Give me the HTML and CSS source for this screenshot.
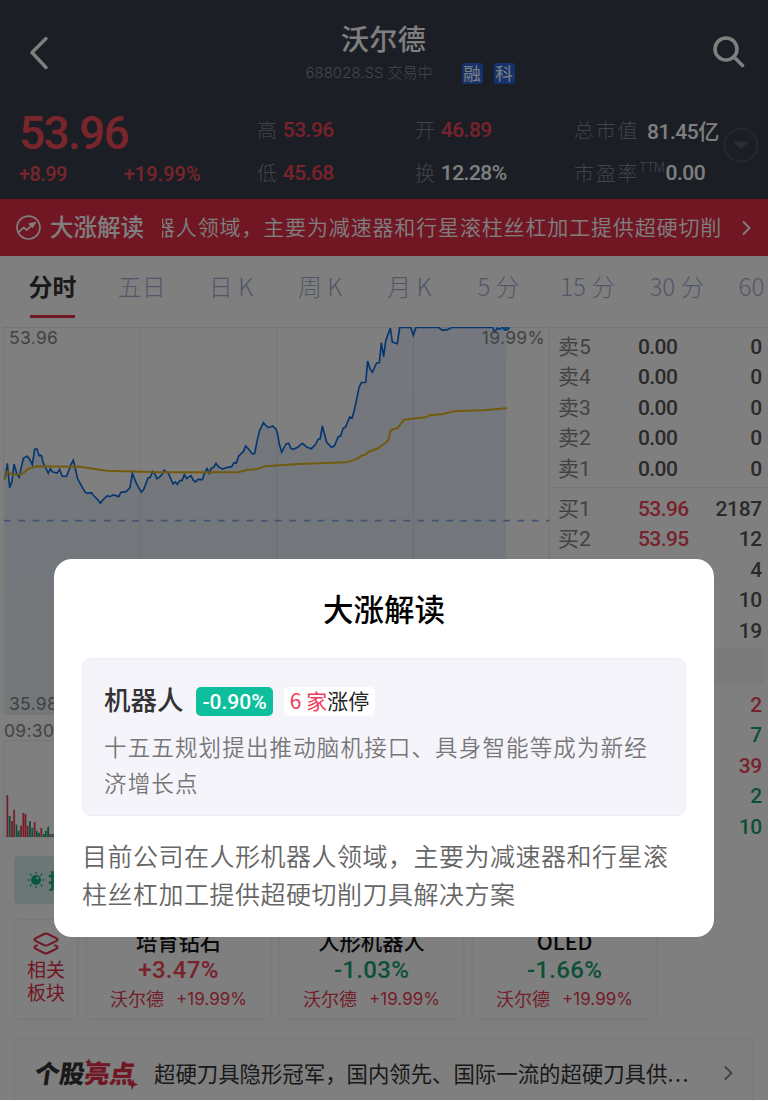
FILE: index.html
```html
<!DOCTYPE html>
<html lang="zh-CN">
<head>
    <meta charset="UTF-8" />
    <meta name="viewport" content="width=device-width, initial-scale=1.0" />
    <title>沃尔德</title>
    <link rel="stylesheet" href="styles.css">
</head>
<body>
    <div class="page">
        <header class="header">
            <div class="nav">
                <svg class="back" viewBox="0 0 20 34"><path d="M17 2.500L3 16.500L17 31.500" /></svg>
                <div class="title">
                    <h1>沃尔德</h1>
                    <div class="subtitle">
                        <span class="code">688028.SS 交易中</span>
                        <span class="tag">融</span>
                        <span class="tag">科</span>
                    </div>
                </div>
                <svg class="search" viewBox="0 0 32 32"><circle cx="13" cy="13" r="11" /><path d="M21 21L29.500 29.500" /></svg>
            </div>
            <div class="quote">
                <div class="price">
                    <div class="last">53.96</div>
                    <div class="change"><span>+8.99</span><span>+19.99%</span></div>
                </div>
                <div class="stats">
                    <div class="stat"><label>高</label><b class="up">53.96</b></div>
                    <div class="stat"><label>开</label><b class="up">46.89</b></div>
                    <div class="stat"><label>总市值</label><b class="cap">81.45亿</b></div>
                    <div class="stat"><label>低</label><b class="up">45.68</b></div>
                    <div class="stat"><label>换</label><b>12.28%</b></div>
                    <div class="stat ttm"><label>市盈率<sup>TTM</sup></label><b>0.00</b></div>
                </div>
                <svg class="more" viewBox="0 0 36 36"><circle cx="18" cy="18" r="16.500" /><path d="M10.500 14.500h15l-7.500 8z" /></svg>
            </div>
        </header>

        <div class="banner">
            <svg class="trend" viewBox="0 0 24 24"><circle cx="12" cy="12" r="11" /><path d="M2.500 16.500L7.500 11.800L10.200 14.500L15.500 9.500" /><path class="tip" d="M12.500 8.300L19 7L15.800 12z" /></svg>
            <strong>大涨解读</strong>
            <div class="marquee"><p>器人领域，主要为减速器和行星滚柱丝杠加工提供超硬切削刀</p></div>
            <svg class="arrow" viewBox="0 0 10 16"><path d="M1.500 2L7.500 8L1.500 14" /></svg>
        </div>

        <nav class="tabs">
            <a class="active">分时</a>
            <a>五日</a>
            <a>日 K</a>
            <a>周 K</a>
            <a>月 K</a>
            <a>5 分</a>
            <a>15 分</a>
            <a>30 分</a>
            <a>60 分</a>
        </nav>

        <div class="market">
            <div class="chart">
                <svg viewBox="0 213 1650 1542">
                    <defs>
                        <linearGradient id="area" x1="0" y1="0" x2="0" y2="1">
                            <stop offset="0" stop-color="#5b8fe8" stop-opacity=".14" />
                            <stop offset="1" stop-color="#4f90b8" stop-opacity=".14" />
                        </linearGradient>
                        <clipPath id="plot"><rect x="12" y="212" width="1640" height="1162" /></clipPath>
                    </defs>
                    <!-- grid -->
                    <path class="grid" d="M12 214.500H1648V1374H12ZM421 214V1374M831 214V1374M1240 214V1374M12 1454H1648V1743H12Z" />
                    <g clip-path="url(#plot)">
                        <path fill="url(#area)" d="M15 668L22 622L29 695L36 676L42 624L57 664L70 607L82 600L97 626L104 580L117 599L130 622L145 652L186 660L199 661L220 613L233 669L255 708L274 710L301 742L322 719L356 722L378 707L390 695L397 652L424 709L444 666L458 646L471 668L492 643L519 684L539 674L553 656L587 678L607 671L621 638L648 622L668 639L695 632L716 600L737 570L757 594L764 592L771 556L790 500L805 515L818 510L832 530L845 589L866 562L880 580L907 562L934 578L954 550L967 510L980 558L994 574L1015 542L1029 517L1049 483L1056 486L1070 430L1084 380L1097 379L1103 315L1117 349L1138 320L1144 260L1151 302L1157 255L1171 214L1177 258L1192 263L1199 214H1518V1374H15Z" />
                        <path class="line" d="M15 668L22 622L29 695L36 676L42 624L50 652L57 664L70 607L82 600L90 612L97 626L104 580L111 579L117 599L124 598L130 622L145 652L151 638L158 648L172 651L179 640L186 660L199 661L206 645L213 625L220 613L233 669L247 694L255 708L262 712L274 710L282 720L294 732L301 742L308 732L322 719L328 722L340 717L356 722L363 709L378 707L390 695L397 652L410 684L424 709L431 700L437 685L444 666L451 664L458 646L465 655L471 668L480 662L486 655L492 643L505 652L512 668L519 684L526 678L532 685L539 674L546 674L553 656L560 668L573 659L580 673L587 678L594 670L607 671L614 651L621 638L628 652L634 637L641 634L648 622L655 632L668 639L682 634L695 632L702 620L709 621L716 600L730 587L737 570L744 577L757 594L764 592L771 556L778 526L790 500L798 509L805 515L818 510L828 520L832 530L838 565L845 589L852 575L859 563L866 562L873 578L880 580L893 574L907 562L920 573L934 578L947 565L954 550L961 548L967 510L980 558L994 574L1003 570L1015 542L1022 540L1029 517L1036 514L1049 483L1056 486L1063 462L1070 430L1077 395L1084 380L1097 379L1103 315L1110 338L1117 349L1130 321L1138 320L1144 260L1151 302L1157 255L1171 216L1177 258L1192 263L1199 214L1232 214L1240 238L1248 214L1315 214L1327 223L1342 221L1357 214L1478 214L1484 228L1492 216L1498 220L1507 214L1518 214" />
                        <path class="avg" d="M15 668L22 645L36 656L65 655L85 638L110 631L240 632L320 644L480 649L715 649L740 642L768 640L795 631L880 625L1040 619L1072 608L1085 599L1098 595L1105 588L1128 579L1137 576L1144 568L1152 565L1165 552L1172 522L1192 517L1212 491L1280 483L1288 478L1325 475L1362 466L1450 463L1518 457" />
                        <path class="prev" d="M12 794H1648" />
                        <circle class="now" cx="1518" cy="213" r="12" />
                    </g>
                    <!-- volume -->
                    <path class="vol red" d="M22 1743V1617M36 1743V1695M42.500 1743V1662M63 1743V1709M70 1743V1671M76.500 1743V1674M83 1743V1709M104 1743V1698M124 1743V1716M151 1743V1734" />
                    <path class="vol green" d="M29 1743V1680M49.500 1743V1706M56 1743V1724M90 1743V1695M97 1743V1715M110.500 1743V1724M117 1743V1730M131 1743V1734M137.500 1743V1724M144.500 1743V1712M158 1743V1734" />
                </svg>
                <span class="mark high">53.96</span>
                <span class="mark pct">19.99%</span>
                <span class="mark low">35.98</span>
                <span class="mark time">09:30</span>
            </div>
            <div class="book">
                <div class="orders">
                    <div class="row"><span>卖5</span><b>0.00</b><i>0</i></div>
                    <div class="row"><span>卖4</span><b>0.00</b><i>0</i></div>
                    <div class="row"><span>卖3</span><b>0.00</b><i>0</i></div>
                    <div class="row"><span>卖2</span><b>0.00</b><i>0</i></div>
                    <div class="row"><span>卖1</span><b>0.00</b><i>0</i></div>
                </div>
                <div class="orders">
                    <div class="row"><span>买1</span><b class="up">53.96</b><i>2187</i></div>
                    <div class="row"><span>买2</span><b class="up">53.95</b><i>12</i></div>
                    <div class="row"><i>4</i></div>
                    <div class="row"><i>10</i></div>
                    <div class="row"><i>19</i></div>
                </div>
                <div class="switch"></div>
                <div class="deals">
                    <div class="row"><i class="up">2</i></div>
                    <div class="row"><i class="down">7</i></div>
                    <div class="row"><i class="up">39</i></div>
                    <div class="row"><i class="down">2</i></div>
                    <div class="row"><i class="down">10</i></div>
                </div>
            </div>
        </div>

        <div class="tip-bar">
            <svg viewBox="0 0 18 18"><circle cx="9" cy="9" r="5" /><path d="M9 1.500v.5M9 16v.5M1.500 9h.5M16 9h.5M3.500 3.500l.4 .4M14.200 14.200l.4 .4M3.500 14.500l.4-.4M14.200 3.900l.4-.4" /><circle class="shine" cx="10.500" cy="7" r="1.300" /></svg>
            <span>技</span>
        </div>

        <div class="sectors">
            <div class="card related">
                <svg viewBox="0 0 28 24"><path d="M12.200 2Q14 1.200 15.800 2L24.600 6.400Q26.600 7.600 24.600 8.800L15.800 13.200Q14 14 12.200 13.200L3.400 8.800Q1.400 7.600 3.400 6.400Z" /><path d="M5 13.300L3.400 14.200Q1.400 15.400 3.400 16.600L12.200 21Q14 21.800 15.800 21L24.600 16.600Q26.600 15.400 24.600 14.200L23 13.300" /></svg>
                <p>相关</p>
                <p>板块</p>
            </div>
            <div class="card sector">
                <h3>培育钻石</h3>
                <div class="rate up">+3.47%</div>
                <div class="stock"><span>沃尔德</span><span class="num">+19.99%</span></div>
            </div>
            <div class="card sector">
                <h3>人形机器人</h3>
                <div class="rate down">-1.03%</div>
                <div class="stock"><span>沃尔德</span><span class="num">+19.99%</span></div>
            </div>
            <div class="card sector">
                <h3>OLED</h3>
                <div class="rate down">-1.66%</div>
                <div class="stock"><span>沃尔德</span><span class="num">+19.99%</span></div>
            </div>
        </div>

        <div class="card highlight">
            <div class="logo">
                <span>个股</span><em>亮点</em>
                <svg class="star one" viewBox="0 0 10 10"><path d="M5 0L6.300 3.700L10 5L6.300 6.300L5 10L3.700 6.300L0 5L3.700 3.700Z" /></svg>
                <svg class="star two" viewBox="0 0 10 10"><path d="M5 0L6.300 3.700L10 5L6.300 6.300L5 10L3.700 6.300L0 5L3.700 3.700Z" /></svg>
            </div>
            <p>超硬刀具隐形冠军，国内领先、国际一流的超硬刀具供<span class="dots">...</span></p>
            <svg class="arrow" viewBox="0 0 10 16"><path d="M1.500 2L7.500 8L1.500 14" /></svg>
        </div>
    </div>

    <!-- Dialog -->
    <div class="overlay">
        <div class="dialog">
            <h2>大涨解读</h2>
            <div class="topic">
                <div class="topic-head">
                    <h3>机器人</h3>
                    <span class="badge">-0.90%</span>
                    <span class="limit"><em>6 家</em>涨停</span>
                </div>
                <p>十五五规划提出推动脑机接口、具身智能等成为新经济增长点</p>
            </div>
            <p class="reason">目前公司在人形机器人领域，主要为减速器和行星滚柱丝杠加工提供超硬切削刀具解决方案</p>
        </div>
    </div>
</body>
</html>
```
FILE: styles.css
```css
* {
    box-sizing: border-box;
    margin: 0;
    padding: 0;
}

body {
    width: 768px;
    height: 1101px;
    overflow: hidden;
    background: #fff;
    font-family: "Noto Sans CJK SC", sans-serif;
    color: #333;
}

svg {
    display: block;
    flex: none;
    fill: none;
    stroke-linecap: round;
    stroke-linejoin: round;
}

b, i, em, h1, h2, h3 {
    font-style: normal;
    font-weight: 500;
}

.page {
    height: 1101px;
    overflow: hidden;
}

.up {
    color: #f04458;
}

.down {
    color: #1ba070;
}

/* Header */
.header {
    height: 199px;
    background: #363c49;
    color: #fff;
}

.nav {
    display: flex;
    justify-content: space-between;
    height: 108px;
    padding: 18px 23px 0 29px;
}

.back {
    width: 20px;
    height: 34px;
    margin-top: 18px;
    stroke: #fff;
    stroke-width: 3.4;
}

.search {
    width: 32px;
    height: 32px;
    margin-top: 18px;
    stroke: #fff;
    stroke-width: 3.6;
}

.title {
    width: 240px;
    margin-left: 9px;
}

.title h1 {
    margin-left: -4px;
    font-size: 28px;
    line-height: 40px;
    letter-spacing: 0.4px;
    text-align: center;
}

.subtitle {
    display: flex;
    align-items: center;
    padding-left: 40px;
    margin-top: 4px;
}

.code {
    flex: none;
    width: 156px;
    font-family: Inter, "Noto Sans CJK SC", sans-serif;
    font-size: 15px;
    line-height: 22px;
    font-weight: 300;
    color: #8b8f97;
    white-space: nowrap;
}

.tag {
    flex: none;
    width: 21px;
    height: 21px;
    margin-right: 11px;
    border-radius: 3px;
    background: #2c64d8;
    font-size: 17.5px;
    line-height: 20px;
    text-align: center;
}

.quote {
    display: flex;
    padding-left: 19px;
}

.price {
    width: 238px;
    font-family: Roboto, sans-serif;
    font-weight: 500;
    color: #f04c58;
}

.last {
    height: 49px;
    font-size: 46px;
    line-height: 50px;
    letter-spacing: -1.7px;
}

.change {
    display: flex;
    gap: 57px;
    font-size: 20px;
    line-height: 34px;
}

.change span:first-child {
    letter-spacing: -0.6px;
}

.stats {
    display: grid;
    grid-template-columns: 158px 159px 145px;
    grid-template-rows: 43px 43px;
}

.stat {
    display: flex;
    align-items: center;
    white-space: nowrap;
}

.stat label {
    margin-right: 4px;
    font-size: 20px;
    font-weight: 300;
    letter-spacing: 1.7px;
    color: #80869a;
}

.stat b {
    font-family: Roboto, "Noto Sans CJK SC", sans-serif;
    font-size: 21px;
    letter-spacing: -0.5px;
}

.stat .cap {
    margin-left: 4px;
}

.ttm label {
    margin-right: 1px;
}

.ttm sup {
    font-family: Inter, sans-serif;
    font-size: 12.5px;
    letter-spacing: -0.6px;
    vertical-align: 9px;
    line-height: 0;
}

.more {
    width: 36px;
    height: 36px;
    margin: 19px 0 0 4px;
    stroke: #4a505e;
    stroke-width: 2;
}

.more path {
    fill: #545b6b;
    stroke: none;
}

/* Red banner */
.banner {
    display: flex;
    align-items: center;
    height: 57px;
    padding: 0 16px;
    background: #e22e48;
    color: #fff;
}

.trend {
    width: 25px;
    height: 25px;
    stroke: #fff;
    stroke-width: 1.6;
}

.trend .tip {
    fill: #fff;
    stroke-width: 1;
}

.banner strong {
    flex: none;
    width: 112px;
    margin: -3px 0 0 9px;
    font-size: 23.5px;
    font-weight: 500;
    white-space: nowrap;
}

.marquee {
    flex: none;
    width: 561px;
    overflow: hidden;
}

.marquee p {
    margin: -4px 0 0 -8px;
    font-size: 21px;
    letter-spacing: 0.85px;
    font-weight: 350;
    white-space: nowrap;
}

.arrow {
    width: 10px;
    height: 16px;
    stroke: currentColor;
    stroke-width: 2;
}

.banner .arrow {
    margin-left: 19px;
}

/* Tabs */
.tabs {
    display: flex;
    height: 71px;
    padding-left: 8px;
}

.tabs a {
    flex: none;
    width: 89.2px;
    height: 63px;
    font-size: 24px;
    line-height: 60px;
    font-weight: 300;
    color: #a4b0cf;
    text-align: center;
    white-space: nowrap;
}

.tabs .active {
    display: flex;
    flex-direction: column;
    align-items: center;
    font-weight: 700;
    color: #333;
}

.tabs .active::after {
    content: "";
    width: 45px;
    height: 3px;
    margin-top: -1px;
    background: #e22e48;
}

/* Chart */
.market {
    display: flex;
    height: 529px;
}

.chart {
    position: relative;
    width: 553px;
}

.chart svg {
    width: 550px;
    height: 514px;
}

.grid {
    stroke: #ebebed;
    stroke-width: 3;
}

.line {
    stroke: #0d6ce0;
    stroke-width: 5;
    stroke-linejoin: miter;
}

.avg {
    stroke: #e3b51c;
    stroke-width: 6;
}

.prev {
    stroke: #84a8e4;
    stroke-width: 5;
    stroke-linecap: butt;
    stroke-dasharray: 20 22.800;
}

.now {
    fill: #1c8cf0;
}

.vol {
    stroke-width: 5.5;
    stroke-linecap: butt;
}

.vol.red {
    stroke: #e8405a;
}

.vol.green {
    stroke: #1ba070;
}

.mark {
    position: absolute;
    font-family: Inter, sans-serif;
    font-size: 17.5px;
    line-height: 22px;
    letter-spacing: 0.3px;
    color: #858585;
}

.high {
    left: 9px;
    top: 0;
}

.pct {
    right: 8px;
    top: 0;
}

.low {
    left: 9px;
    top: 366px;
}

.time {
    left: 4px;
    top: 393px;
}

/* Order book */
.book {
    flex: 1;
    font-family: Roboto, "Noto Sans CJK SC", sans-serif;
    font-size: 21px;
}

.orders {
    height: 160px;
    padding-top: 4px;
    border-top: 1px solid #ebebed;
}

.orders + .orders {
    padding-top: 6px;
}

.row {
    display: flex;
    height: 30.4px;
    padding: 0 6px 0 5px;
    line-height: 30px;
}

.row span {
    width: 80px;
    color: #858585;
}

.row i {
    margin-left: auto;
    letter-spacing: -0.3px;
}

.row b, .row i {
    font-weight: 500;
}

.row b {
    letter-spacing: -0.6px;
}

.row b:not(.up), .row i:not(.up):not(.down) {
    color: #555;
}

.switch {
    height: 36px;
    margin: 1px 4px 6px 0;
    background: #f6f6f8;
}

/* Tips */
.tip-bar {
    display: flex;
    align-items: center;
    gap: 3px;
    width: 400px;
    height: 48px;
    margin-left: 14px;
    padding-left: 13px;
    border-radius: 4px;
    background: #d5efeb;
    font-size: 20px;
    font-weight: 700;
    color: #10ac86;
}

.tip-bar svg {
    width: 18px;
    height: 18px;
    fill: #10ac86;
    stroke: #10ac86;
    stroke-width: 1.6;
}

.tip-bar circle {
    stroke: none;
}

.tip-bar .shine {
    fill: #d5efeb;
}

/* Sectors */
.card {
    border: 1px solid #f2f2f4;
    border-radius: 5px;
    background: #fff;
    box-shadow: 0 2px 6px rgba(0, 0, 0, 0.04);
}

.sectors {
    display: flex;
    gap: 8px;
    padding: 15px 14px 19px;
}

.related {
    display: flex;
    flex-direction: column;
    align-items: center;
    width: 64px;
    height: 100px;
    padding-top: 12px;
    font-size: 19px;
    line-height: 23px;
    color: #e22e48;
}

.related svg {
    width: 28px;
    height: 24px;
    margin-bottom: 1px;
    stroke: #e22e48;
    stroke-width: 2;
}

.sector {
    width: 185px;
    height: 100px;
    padding-top: 7px;
    text-align: center;
}

.sector h3 {
    font-size: 21.3px;
    line-height: 28px;
    color: #111;
}

.rate {
    padding-top: 1px;
    font-family: Roboto, sans-serif;
    font-size: 24px;
    font-weight: 500;
    line-height: 29px;
    letter-spacing: 0.3px;
}

.stock {
    display: flex;
    justify-content: center;
    gap: 12px;
    font-size: 18px;
    line-height: 26px;
    color: #e63c52;
}

.stock .num {
    font-family: Inter, sans-serif;
    font-size: 17px;
    line-height: 28px;
}

.highlight {
    display: flex;
    align-items: center;
    width: 739px;
    height: 72px;
    margin-left: 14px;
    padding-left: 20px;
}

.logo {
    position: relative;
    flex: none;
    width: 119px;
    margin-top: -4px;
    font-size: 25px;
    font-weight: 900;
    line-height: 34px;
    white-space: nowrap;
    transform: skewX(-8deg);
}

.logo em {
    font-weight: 900;
    color: #e22e48;
}

.star {
    position: absolute;
    fill: #e22e48;
}

.star.one {
    left: 48px;
    top: 3px;
    width: 8px;
    height: 8px;
}

.star.two {
    left: 94px;
    top: 24px;
    width: 11px;
    height: 11px;
}

.highlight p {
    flex: none;
    width: 570px;
    margin-top: -4px;
    font-size: 21.4px;
    white-space: nowrap;
}

.dots {
    letter-spacing: 1.6px;
}

.highlight .arrow {
    margin-top: -2px;
    color: #888;
}

/* Dialog */
.overlay {
    position: fixed;
    top: 0;
    left: 0;
    width: 768px;
    height: 1100px;
    padding: 559px 54px 0;
    background: rgba(0, 0, 0, 0.5);
}

.dialog {
    height: 378px;
    padding: 26px 28px 0;
    border-radius: 18px;
    background: #fff;
}

.dialog h2 {
    font-size: 30.5px;
    line-height: 46px;
    text-align: center;
    color: #000;
}

.topic {
    height: 158px;
    margin-top: 27px;
    padding: 25px 20px 0 21px;
    border: 1px solid #ececf2;
    border-radius: 9px;
    background: #f5f4fb;
}

.topic-head {
    display: flex;
    align-items: center;
    height: 34px;
}

.topic h3 {
    width: 92px;
    margin-top: -5px;
    font-size: 26.5px;
}

.badge {
    width: 77px;
    height: 29px;
    border-radius: 5px;
    background: #0dbf9d;
    font-family: Roboto, sans-serif;
    font-size: 21px;
    font-weight: 500;
    line-height: 30px;
    text-align: center;
    color: #fff;
}

.limit {
    width: 91px;
    height: 29px;
    margin-left: 11px;
    border-radius: 5px;
    background: #fff;
    font-size: 21px;
    line-height: 26px;
    text-align: center;
    color: #222;
    white-space: nowrap;
}

.limit em {
    font-weight: 400;
    color: #f03c58;
}

.topic p {
    margin-top: 11px;
    font-size: 22.5px;
    line-height: 35.5px;
    letter-spacing: 1.15px;
    font-weight: 350;
    color: #777;
}

.reason {
    margin-top: 21px;
    font-size: 25px;
    line-height: 37.5px;
    letter-spacing: 0.5px;
    font-weight: 350;
    color: #666;
}
```
